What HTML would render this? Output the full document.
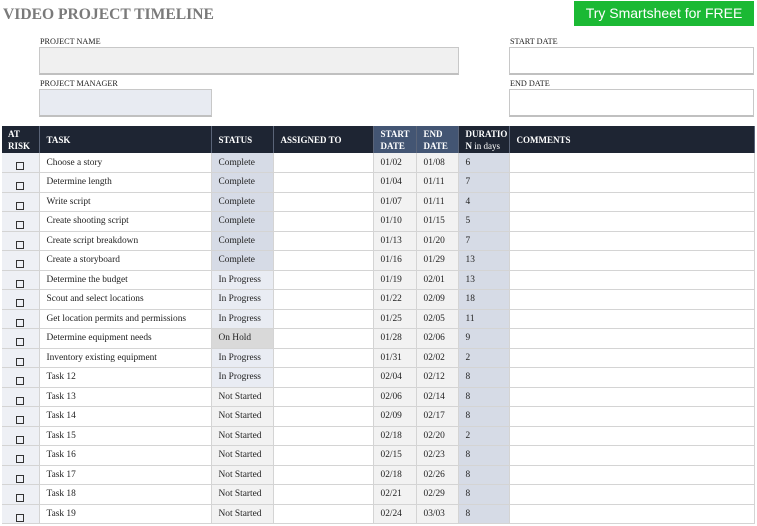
<!DOCTYPE html>
<html><head><meta charset="utf-8"><style>
*{margin:0;padding:0;box-sizing:border-box}
body{width:757px;height:526px;background:#fff;position:relative;overflow:hidden;font-family:"Liberation Serif","DejaVu Serif",serif;color:#222}
.title{position:absolute;left:3px;top:5px;font-size:15.6px;font-weight:bold;color:#7a7a7a;line-height:20px}
.btn{position:absolute;left:574px;top:1px;width:180px;height:25px;background:#1bb934;color:#fff;font-family:"Liberation Sans",sans-serif;font-size:14px;text-align:center;line-height:25px}
.lbl{position:absolute;font-size:8.2px;color:#222}
.box{position:absolute;border:1px solid #c8c8c8;border-bottom:2px solid #c0c0c0}
table{position:absolute;left:2px;top:126px;border-collapse:collapse;table-layout:fixed;width:752px}
th{background:#1e2533;color:#fff;font-size:9px;text-align:left;font-weight:bold;padding:0 7px;height:27px;line-height:12px;border-right:1px solid #5a6478}
th.d{background:#435573}
th span{font-weight:normal}
td{height:19.5px;font-size:9.4px;line-height:12px;padding:0 7px;border-bottom:1px solid #d4d4d4;border-right:1px solid #d4d4d4;white-space:nowrap;overflow:hidden}
td.r{background:#eef0f5;text-align:center;padding:0}
.cb{display:inline-block;width:8px;height:8px;border:1px solid #333;position:relative;top:4px;vertical-align:middle}
td.c{background:#d6dbe6}td.p{background:#e9ecf3}td.h{background:#d9d9d9}td.n{background:#f2f2f2}
td.g{background:#f2f2f2}td.u{background:#d6dbe6}
</style></head><body>
<div class="title">VIDEO PROJECT TIMELINE</div>
<div class="btn">Try Smartsheet for FREE</div>
<div class="lbl" style="left:40px;top:37px">PROJECT NAME</div>
<div class="box" style="left:39px;top:47px;width:420px;height:28px;background:#f0f0f0"></div>
<div class="lbl" style="left:40px;top:79px">PROJECT MANAGER</div>
<div class="box" style="left:39px;top:89px;width:173px;height:28px;background:#e8ebf2"></div>
<div class="lbl" style="left:510px;top:37px">START DATE</div>
<div class="box" style="left:509px;top:47px;width:245px;height:28px;background:#fff"></div>
<div class="lbl" style="left:510px;top:79px">END DATE</div>
<div class="box" style="left:509px;top:89px;width:245px;height:28px;background:#fff"></div>
<table>
<colgroup><col style="width:37px"><col style="width:172px"><col style="width:62px"><col style="width:100px"><col style="width:43px"><col style="width:42px"><col style="width:51px"><col style="width:245px"></colgroup>
<tr><th style="padding:0 6px">AT<br>RISK</th><th>TASK</th><th>STATUS</th><th>ASSIGNED TO</th><th class="d">START<br>DATE</th><th class="d">END<br>DATE</th><th>DURATIO<br>N <span>in days</span></th><th>COMMENTS</th></tr>
<tr><td class="r"><span class="cb"></span></td><td>Choose a story</td><td class="c">Complete</td><td></td><td class="g">01/02</td><td class="g">01/08</td><td class="u">6</td><td></td></tr>
<tr><td class="r"><span class="cb"></span></td><td>Determine length</td><td class="c">Complete</td><td></td><td class="g">01/04</td><td class="g">01/11</td><td class="u">7</td><td></td></tr>
<tr><td class="r"><span class="cb"></span></td><td>Write script</td><td class="c">Complete</td><td></td><td class="g">01/07</td><td class="g">01/11</td><td class="u">4</td><td></td></tr>
<tr><td class="r"><span class="cb"></span></td><td>Create shooting script</td><td class="c">Complete</td><td></td><td class="g">01/10</td><td class="g">01/15</td><td class="u">5</td><td></td></tr>
<tr><td class="r"><span class="cb"></span></td><td>Create script breakdown</td><td class="c">Complete</td><td></td><td class="g">01/13</td><td class="g">01/20</td><td class="u">7</td><td></td></tr>
<tr><td class="r"><span class="cb"></span></td><td>Create a storyboard</td><td class="c">Complete</td><td></td><td class="g">01/16</td><td class="g">01/29</td><td class="u">13</td><td></td></tr>
<tr><td class="r"><span class="cb"></span></td><td>Determine the budget</td><td class="p">In Progress</td><td></td><td class="g">01/19</td><td class="g">02/01</td><td class="u">13</td><td></td></tr>
<tr><td class="r"><span class="cb"></span></td><td>Scout and select locations</td><td class="p">In Progress</td><td></td><td class="g">01/22</td><td class="g">02/09</td><td class="u">18</td><td></td></tr>
<tr><td class="r"><span class="cb"></span></td><td>Get location permits and permissions</td><td class="p">In Progress</td><td></td><td class="g">01/25</td><td class="g">02/05</td><td class="u">11</td><td></td></tr>
<tr><td class="r"><span class="cb"></span></td><td>Determine equipment needs</td><td class="h">On Hold</td><td></td><td class="g">01/28</td><td class="g">02/06</td><td class="u">9</td><td></td></tr>
<tr><td class="r"><span class="cb"></span></td><td>Inventory existing equipment</td><td class="p">In Progress</td><td></td><td class="g">01/31</td><td class="g">02/02</td><td class="u">2</td><td></td></tr>
<tr><td class="r"><span class="cb"></span></td><td>Task 12</td><td class="p">In Progress</td><td></td><td class="g">02/04</td><td class="g">02/12</td><td class="u">8</td><td></td></tr>
<tr><td class="r"><span class="cb"></span></td><td>Task 13</td><td class="n">Not Started</td><td></td><td class="g">02/06</td><td class="g">02/14</td><td class="u">8</td><td></td></tr>
<tr><td class="r"><span class="cb"></span></td><td>Task 14</td><td class="n">Not Started</td><td></td><td class="g">02/09</td><td class="g">02/17</td><td class="u">8</td><td></td></tr>
<tr><td class="r"><span class="cb"></span></td><td>Task 15</td><td class="n">Not Started</td><td></td><td class="g">02/18</td><td class="g">02/20</td><td class="u">2</td><td></td></tr>
<tr><td class="r"><span class="cb"></span></td><td>Task 16</td><td class="n">Not Started</td><td></td><td class="g">02/15</td><td class="g">02/23</td><td class="u">8</td><td></td></tr>
<tr><td class="r"><span class="cb"></span></td><td>Task 17</td><td class="n">Not Started</td><td></td><td class="g">02/18</td><td class="g">02/26</td><td class="u">8</td><td></td></tr>
<tr><td class="r"><span class="cb"></span></td><td>Task 18</td><td class="n">Not Started</td><td></td><td class="g">02/21</td><td class="g">02/29</td><td class="u">8</td><td></td></tr>
<tr><td class="r"><span class="cb"></span></td><td>Task 19</td><td class="n">Not Started</td><td></td><td class="g">02/24</td><td class="g">03/03</td><td class="u">8</td><td></td></tr>
</table>
</body></html>
